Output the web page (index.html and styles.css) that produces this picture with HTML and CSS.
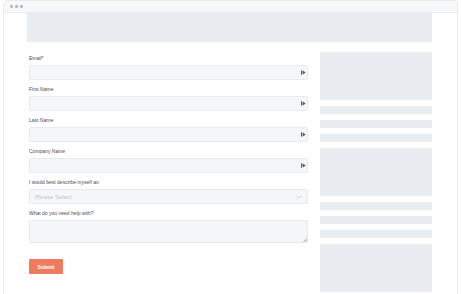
FILE: index.html
```html
<!DOCTYPE html>
<html lang="en">
<head>
    <meta charset="UTF-8" />
    <meta name="viewport" content="width=device-width, initial-scale=1.0" />
    <title>Contact Form</title>
    <link rel="stylesheet" href="styles.css">
</head>
<body>
    <div class="window">

        <!-- Browser chrome -->
        <div class="titlebar">
            <span class="dot"></span>
            <span class="dot"></span>
            <span class="dot"></span>
        </div>

        <div class="content">
            <div class="banner"></div>

            <div class="main">
                <form class="form" onsubmit="return false">
                    <div class="field">
                        <label for="email">Email*</label>
                        <div class="input-wrap">
                            <input type="email" id="email" />
                            <svg class="fill-icon" viewBox="0 0 6 6" width="5" height="5">
                                <rect x="0" y="0.5" width="1.3" height="5" fill="#555" />
                                <path d="M2 0.5 L5.6 3 L2 5.5 Z" fill="#555" />
                            </svg>
                        </div>
                    </div>

                    <div class="field">
                        <label for="firstName">First Name</label>
                        <div class="input-wrap">
                            <input type="text" id="firstName" />
                            <svg class="fill-icon" viewBox="0 0 6 6" width="5" height="5">
                                <rect x="0" y="0.5" width="1.3" height="5" fill="#555" />
                                <path d="M2 0.5 L5.6 3 L2 5.5 Z" fill="#555" />
                            </svg>
                        </div>
                    </div>

                    <div class="field">
                        <label for="lastName">Last Name</label>
                        <div class="input-wrap">
                            <input type="text" id="lastName" />
                            <svg class="fill-icon" viewBox="0 0 6 6" width="5" height="5">
                                <rect x="0" y="0.5" width="1.3" height="5" fill="#555" />
                                <path d="M2 0.5 L5.6 3 L2 5.5 Z" fill="#555" />
                            </svg>
                        </div>
                    </div>

                    <div class="field">
                        <label for="company">Company Name</label>
                        <div class="input-wrap">
                            <input type="text" id="company" />
                            <svg class="fill-icon" viewBox="0 0 6 6" width="5" height="5">
                                <rect x="0" y="0.5" width="1.3" height="5" fill="#555" />
                                <path d="M2 0.5 L5.6 3 L2 5.5 Z" fill="#555" />
                            </svg>
                        </div>
                    </div>

                    <div class="field">
                        <label for="describe">I would best describe myself as:</label>
                        <div class="select">
                            <span>Please Select</span>
                            <svg viewBox="0 0 8 5" width="6" height="4">
                                <path d="M0.5 0.5 L4 4 L7.5 0.5" fill="none" stroke="#c6cad0" stroke-width="1" />
                            </svg>
                        </div>
                    </div>

                    <div class="field">
                        <label for="help">What do you need help with?</label>
                        <div class="input-wrap">
                            <textarea id="help"></textarea>
                            <!-- resize grip -->
                            <svg class="grip" viewBox="0 0 4 4" width="4" height="4">
                                <path d="M0.5 3.8 L3.8 0.5 M2 3.8 L3.8 2" stroke="#8a8d92" stroke-width="0.7" />
                            </svg>
                        </div>
                    </div>

                    <button type="submit" class="submit">Submit</button>
                </form>

                <div class="sidebar">
                    <div class="block big"></div>
                    <div class="block bar"></div>
                    <div class="block bar"></div>
                    <div class="block bar"></div>
                    <div class="block big"></div>
                    <div class="block bar"></div>
                    <div class="block bar"></div>
                    <div class="block bar"></div>
                    <div class="block big"></div>
                </div>
            </div>
        </div>
    </div>
</body>
</html>
```

FILE: styles.css
```css
:root {
    --frame: #e9ebef;
    --chrome: #f6f7f9;
    --skeleton: #e9edf2;
    --field-bg: #f5f6f8;
    --field-border: #e8eaee;
    --text: #4a4d52;
    --accent: #ee7b5e;
}

* {
    box-sizing: border-box;
}

body {
    margin: 0;
    padding: 0 3px;
    font-family: 'Liberation Sans', Arial, sans-serif;
    background-color: #fff;
    color: var(--text);
    height: 294px;
    overflow: hidden;
}

.window {
    border: 1px solid var(--frame);
    border-radius: 3px 3px 0 0;
    height: 300px;
}

.titlebar {
    height: 12px;
    background-color: var(--chrome);
    border-bottom: 1px solid var(--frame);
    display: flex;
    align-items: center;
    gap: 2.5px;
    padding-left: 6px;
}

.dot {
    width: 2.5px;
    height: 2.5px;
    border-radius: 50%;
    background-color: #b4b8be;
}

.content {
    padding: 0 25px 0 23px;
}

.banner {
    height: 29px;
    background-color: var(--skeleton);
}

.main {
    display: grid;
    grid-template-columns: 1fr 112px;
    gap: 12px;
    margin-top: 10px;
}

.form {
    padding-left: 2px;
    padding-top: 2px;
    display: flex;
    flex-direction: column;
    gap: 5px;
}

.field {
    display: flex;
    flex-direction: column;
}

label {
    font-size: 5px;
    line-height: 8px;
    height: 8px;
    margin-bottom: 3px;
    color: var(--text);
}

.input-wrap {
    position: relative;
}

input,
textarea,
.select {
    display: block;
    width: 100%;
    height: 15px;
    margin: 0;
    padding: 0 5px;
    background-color: var(--field-bg);
    border: 1px solid var(--field-border);
    border-radius: 2px;
    font-family: inherit;
    outline: none;
}

.fill-icon {
    position: absolute;
    right: 2px;
    top: 5px;
}

.select {
    display: flex;
    align-items: center;
    justify-content: space-between;
    font-size: 6px;
    color: #c2c6cc;
}

textarea {
    height: 23px;
    resize: none;
}

.grip {
    position: absolute;
    right: 1px;
    bottom: 1px;
}

.submit {
    margin-top: 11px;
    width: 34px;
    height: 15px;
    padding: 0;
    background-color: var(--accent);
    color: #fff;
    border: none;
    border-radius: 1px;
    font-family: inherit;
    font-size: 5px;
    font-weight: bold;
    cursor: pointer;
}

.sidebar {
    display: flex;
    flex-direction: column;
    gap: 6px;
}

.block {
    background-color: var(--skeleton);
}

.block.big {
    height: 48px;
}

.block.bar {
    height: 8px;
}
```
